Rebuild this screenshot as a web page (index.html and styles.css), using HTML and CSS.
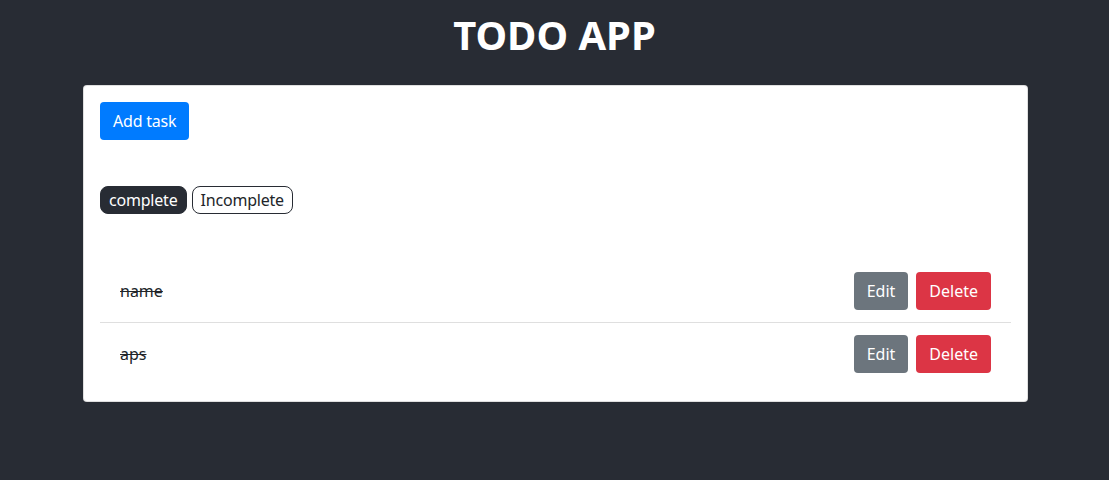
FILE: index.html
```html
<!DOCTYPE html>
<html>
<head>
<meta charset="utf-8">
<link rel="stylesheet" href="styles.css">
</head>
<body>
<div class="app">
  <h1 class="title">TODO APP</h1>
  <div class="card">
    <div><button class="btn btn-primary">Add task</button></div>
    <div class="filters">
      <span class="badge badge-dark">complete</span>
      <span class="badge badge-light">Incomplete</span>
    </div>
    <ul class="list">
      <li class="item">
        <span class="task done">name</span>
        <div class="actions">
          <button class="btn btn-secondary">Edit</button>
          <button class="btn btn-danger">Delete</button>
        </div>
      </li>
      <li class="item">
        <span class="task done">aps</span>
        <div class="actions">
          <button class="btn btn-secondary">Edit</button>
          <button class="btn btn-danger">Delete</button>
        </div>
      </li>
    </ul>
  </div>
</div>
</body>
</html>
```
FILE: styles.css
```css
* { box-sizing: border-box; }
html, body {
  margin: 0;
  background: #282c34;
  height: 100%;
}
body {
  font-family: "Noto Sans", "Open Sans", sans-serif;
  font-size: 16px;
  color: #212529;
}
.app {
  padding-top: 11px;
}
.title {
  margin: 0 0 26px;
  text-align: center;
  color: #fff;
  font-size: 40px;
  line-height: 48px;
  font-weight: 700;
}
.card {
  width: 945px;
  margin: 0 auto;
  transform: translateX(1px);
  background: #fff;
  border: 1px solid rgba(0,0,0,.125);
  border-radius: 4px;
  padding: 16px;
}
.btn {
  font-family: inherit;
  font-size: 16px;
  line-height: 24px;
  height: 38px;
  padding: 6px 12px;
  border: 1px solid transparent;
  border-radius: 4px;
  color: #fff;
  cursor: pointer;
}
.btn-primary { background: #007bff; letter-spacing: -0.2px; }
.btn-secondary { background: #6c757d; }
.btn-danger { background: #dc3545; }
.filters {
  margin-top: 46px;
  display: flex;
  gap: 5px;
}
.badge {
  display: inline-block;
  height: 28px;
  line-height: 26px;
  padding: 0 8px;
  border-radius: 8px;
  font-size: 16px;
  letter-spacing: -0.2px;
  border: 1px solid #282c34;
}
.badge-dark { background: #282c34; color: #fff; }
.badge-light { background: #fff; color: #212529; }
.list {
  list-style: none;
  margin: 46px 0 0;
  padding: 0;
}
.item {
  display: flex;
  align-items: center;
  justify-content: space-between;
  padding: 12px 20px;
}
.item + .item {
  border-top: 1px solid rgba(0,0,0,.125);
}
.task.done {
  text-decoration: line-through;
}
.actions {
  display: flex;
  gap: 8px;
}
```
